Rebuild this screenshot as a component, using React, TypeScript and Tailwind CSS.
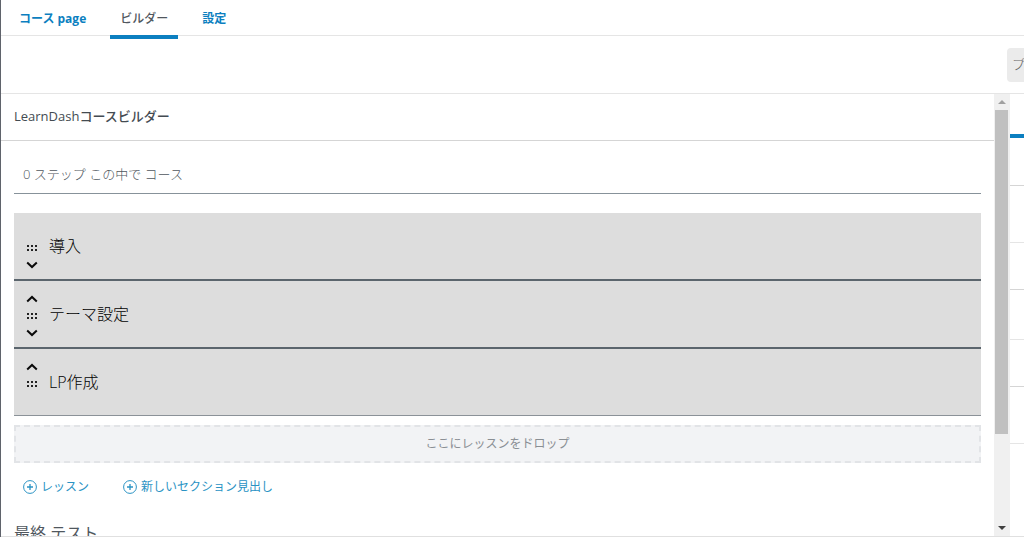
import clsx from "clsx";

const tabs = [
  { label: "コース page", active: false },
  { label: "ビルダー", active: true },
  { label: "設定", active: false },
];

const lessons = ["導入", "テーマ設定", "LP作成"];

const Chevron = ({ up }: { up?: boolean }) => (
  <svg width="12" height="8" viewBox="0 0 12 8" fill="none">
    <path
      d={up ? "M1.2 6.4 6 1.9l4.8 4.5" : "M1.2 1.6 6 6.1l4.8-4.5"}
      stroke="#0a0a0a"
      strokeWidth="2"
    />
  </svg>
);

const DragDots = () => (
  <svg width="12" height="8" viewBox="0 0 12 8" fill="#222">
    {[1, 5, 9].map((x) =>
      [1, 5].map((y) => (
        <rect key={`${x}-${y}`} x={x} y={y} width="2" height="2" />
      ))
    )}
  </svg>
);

const PlusCircle = () => (
  <svg width="14" height="14" viewBox="0 0 14 14" fill="none" stroke="#2a93c4">
    <circle cx="7" cy="7" r="6.4" strokeWidth="1" />
    <path d="M7 4v6M4 7h6" strokeWidth="1.3" />
  </svg>
);

const LessonRow = ({
  title,
  first,
  last,
}: {
  title: string;
  first: boolean;
  last: boolean;
}) => (
  <li
    className={clsx(
      "flex items-center bg-[#dddddd] px-3",
      last
        ? "h-[67px] border-b border-[#8b9298]"
        : "h-[68px] border-b-2 border-[#5b656d]"
    )}
  >
    <div className="flex w-3 flex-col items-center gap-[7px] pt-[3px]">
      <button
        aria-label="上へ移動"
        className={clsx("flex h-3 items-center", first && "invisible")}
      >
        <Chevron up />
      </button>
      <DragDots />
      <button
        aria-label="下へ移動"
        className={clsx("flex h-3 items-center", last && "invisible")}
      >
        <Chevron />
      </button>
    </div>
    <span className="ml-[11px] text-base font-light text-black">{title}</span>
  </li>
);

const ScrollBar = () => (
  <div className="flex w-4 shrink-0 flex-col border-r border-[#f0f0f0] bg-[#f0f0f0]">
    <button
      aria-label="上へスクロール"
      className="flex h-4 shrink-0 items-center justify-center"
    >
      <svg width="8" height="4" viewBox="0 0 8 4" fill="#a0a0a0">
        <path d="M4 0l4 4H0z" />
      </svg>
    </button>
    <div className="flex-1">
      <div className="mx-px h-[79%] bg-[#c0c0c0]" />
    </div>
    <button
      aria-label="下へスクロール"
      className="flex h-4 shrink-0 items-center justify-center"
    >
      <svg width="8" height="4" viewBox="0 0 8 4" fill="#404040">
        <path d="M4 4L0 0h8z" />
      </svg>
    </button>
  </div>
);

// Only the left edge of the settings sidebar is on screen
const Sidebar = () => (
  <aside className="flex w-[14px] shrink-0 flex-col">
    <div className="h-[44px] border-b-4 border-[#0c7fc0]" />
    <div className="h-12 border-b border-[#d5d5d5]" />
    <div className="h-[57px] border-b border-[#e5e5e5]" />
    <div className="h-[47px] border-b border-[#d5d5d5]" />
    <div className="h-[50px] border-b border-[#e5e5e5]" />
    <div className="h-[47px] border-b border-[#d5d5d5]" />
    <div className="h-[57px] border-b border-[#e5e5e5]" />
  </aside>
);

const App = () => {
  return (
    <div className="flex h-screen flex-col overflow-hidden border-l border-[#5f636b] bg-white font-['Open_Sans','Noto_Sans_CJK_JP',sans-serif]">
      <nav className="flex h-9 shrink-0 gap-4 border-b border-[#e5e5e5] pl-[10px]">
        {tabs.map((tab) => (
          <a
            key={tab.label}
            href="#"
            className={clsx(
              "flex h-[39px] items-center border-b-4 pt-0.5 text-xs",
              tab.active
                ? "border-[#0c7fc0] px-[10px] font-medium text-[#50575e]"
                : "border-transparent px-2 font-bold text-[#0c7fc0]"
            )}
          >
            {tab.label}
          </a>
        ))}
      </nav>
      <div className="flex h-[58px] shrink-0 items-center overflow-hidden border-b border-[#e5e5e5]">
        <button className="-mr-[73px] ml-auto h-[34px] w-[90px] shrink-0 rounded-sm bg-[#ebebeb] pl-[5px] text-left text-[13px] font-light text-[#666]">
          プレビュー
        </button>
      </div>
      <div className="flex min-h-0 flex-1 border-b border-[#e0e0e0]">
        <main className="min-w-0 flex-1 overflow-hidden">
          <h1 className="flex h-[47px] items-center border-b border-[#d5d5d5] px-[13px] text-[13px] font-medium text-[#444b52]">
            LearnDashコースビルダー
          </h1>
          <div className="px-[13px]">
            <p className="flex h-[53px] items-end border-b border-[#87929a] px-[9px] pb-[9px] text-[13px] font-light text-[#50575e]">
              0 ステップ この中で コース
            </p>
            <ul className="mt-[19px]">
              {lessons.map((title, i) => (
                <LessonRow
                  key={title}
                  title={title}
                  first={i === 0}
                  last={i === lessons.length - 1}
                />
              ))}
            </ul>
            <div className="mt-[9px] flex h-[38px] items-center justify-center border-2 border-dashed border-[#e2e4e7] bg-[#f2f3f5] text-xs text-[#8a8f94]">
              ここにレッスンをドロップ
            </div>
            <div className="mt-[14px] flex gap-[34px] px-[9px] text-xs text-[#2a93c4]">
              <button className="flex h-5 items-center gap-1">
                <PlusCircle />
                レッスン
              </button>
              <button className="flex h-5 items-center gap-1">
                <PlusCircle />
                新しいセクション見出し
              </button>
            </div>
            <h2 className="mt-6 text-base leading-6 text-[#50575e]">
              最終 テスト
            </h2>
          </div>
        </main>
        <ScrollBar />
        <Sidebar />
      </div>
    </div>
  );
};

export default App;
